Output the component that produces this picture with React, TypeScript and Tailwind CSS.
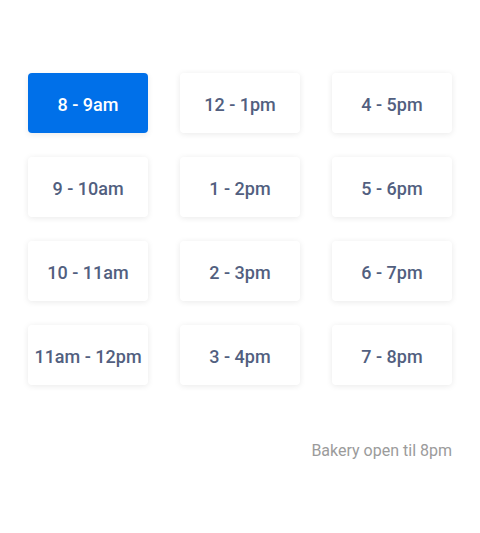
import { useState } from "react";

const slots = [
  "8 - 9am", "12 - 1pm", "4 - 5pm",
  "9 - 10am", "1 - 2pm", "5 - 6pm",
  "10 - 11am", "2 - 3pm", "6 - 7pm",
  "11am - 12pm", "3 - 4pm", "7 - 8pm",
];

export default function App() {
  const [selected, setSelected] = useState("8 - 9am");

  return (
    <div className="w-[480px] h-[533px] bg-white px-[28px] pt-[73px]" style={{ fontFamily: "Roboto, sans-serif" }}>
      <div className="grid grid-cols-3 gap-x-[32px] gap-y-[24px]">
        {slots.map((s) => {
          const active = s === selected;
          return (
            <button
              key={s}
              onClick={() => setSelected(s)}
              className={
                active
                  ? "h-[60px] rounded-[4px] bg-[#0070e9] text-white text-[18px] font-medium shadow-[0_2px_6px_rgba(0,0,0,0.08)]"
                  : "h-[60px] rounded-[4px] bg-white text-[#525f7f] text-[18px] font-medium shadow-[0_1px_6px_rgba(0,0,0,0.09)]"
              }
            >
              <span className="relative top-[1px]">{s}</span>
            </button>
          );
        })}
      </div>
      <p className="mt-[54px] text-right text-[16px] text-[#9b9b9b]">Bakery open til 8pm</p>
    </div>
  );
}
